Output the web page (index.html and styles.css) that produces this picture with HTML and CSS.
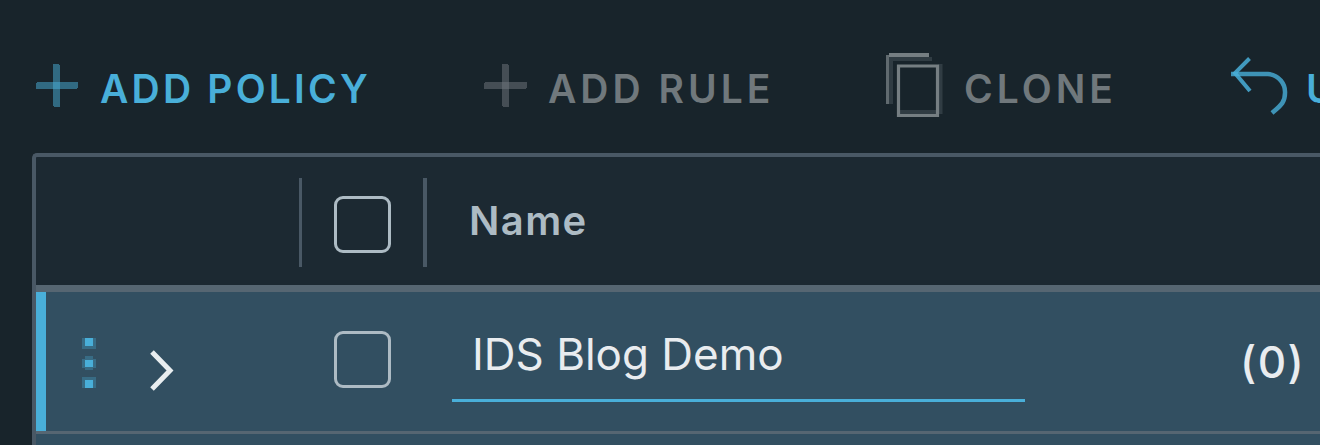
FILE: index.html
```html
<!DOCTYPE html>
<html lang="en">
<head>
<meta charset="utf-8">
<title>Policies</title>
<link rel="stylesheet" href="styles.css">
</head>
<body>
<nav class="toolbar">
  <div class="action primary">
    <svg class="icon plus" width="43" height="72" viewBox="0 0 43 72" fill="currentColor"><path d="M1 32h41v6h-1v1H0v-6h1z"/><path d="M17 14h6v1h1v42h-6v-1h-1z"/></svg>
    <span class="label policy">ADD POLICY</span>
  </div>
  <div class="action">
    <svg class="icon plus" width="43" height="72" viewBox="0 0 43 72" fill="#727780"><path d="M1 32h42v6h-1v1H0v-6h1z"/><path d="M18 14h6v1h1v42h-6v-1h-1z"/></svg>
    <span class="label rule">ADD RULE</span>
  </div>
  <div class="action">
    <svg class="icon" width="57" height="72" viewBox="0 0 57 72" fill="none"><path d="M5 54V9H46" stroke="#303c43" stroke-width="4"/><path d="M1.500 54V5" stroke="#606a6f" stroke-width="3"/><path d="M3 5H43" stroke="#757e82" stroke-width="4"/><path d="M14 62H50M54.500 14v50" stroke="#303c43" stroke-width="4"/><path d="M12.500 16H51.500V65.500H12.500z" stroke="#757e82" stroke-width="3.200"/></svg>
    <span class="label clone">CLONE</span>
  </div>
  <div class="action primary">
    <svg class="icon" width="57" height="72" viewBox="0 0 57 72" fill="none" stroke="currentColor"><path d="M18.500 8.500L4 23L19 41" stroke-width="4" opacity=".85"/><path d="M0 24H37C48 25 54.500 34 54 43C54 53 49 56 41 63" stroke-width="4.500" opacity=".8"/></svg>
    <span class="label undo">UNDO</span>
  </div>
</nav>
<main class="table">
  <div class="row head">
    <div></div><i class="sep"></i>
    <div class="check"><span class="box"></span></div><i class="sep"></i>
    <div class="name">Name</div>
  </div>
  <div class="row item">
    <div class="controls">
      <svg class="dots" width="14" height="54" viewBox="0 0 14 54" fill="#49afd9"><g opacity=".3"><path d="M0 3h14v11H0zM0 24h14v9H0zM3 21h8v14H3zM0 42h14v11H0z"/></g><path d="M3 3h8v8H3zM3 25h8v7H3zM3 45h8v8H3z"/></svg>
      <svg class="chevron" width="26" height="44" viewBox="0 0 26 44" fill="none" stroke="#e9eef0" stroke-width="5"><path d="M3 3L21 21.500L3 40"/></svg>
    </div><i></i>
    <div class="check"><span class="box"></span></div><i></i>
    <div class="field"><span>IDS Blog Demo</span></div>
    <div class="count">(0)</div>
  </div>
  <div class="next"></div>
</main>
</body>
</html>
```
FILE: styles.css
```css
* { box-sizing: border-box; }
body {
  margin: 0;
  height: 445px;
  overflow: hidden;
  background: #18242b;
  color: #e9ecef;
  font-family: Inter, Lato, sans-serif;
}
.toolbar {
  display: grid;
  grid-template-columns: 448px 402px 345px minmax(0, 1fr);
  height: 153px;
  padding: 50px 0 0 36px;
  overflow: hidden;
  color: #70787c;
}
.action { display: flex; align-items: flex-start; gap: 21px; white-space: nowrap; }
.action.primary { color: #49afd9; }
.action:last-child { gap: 18px; overflow: hidden; }
.icon { flex: none; }
.plus path { opacity: .5; }
.label { font-size: 39px; line-height: 60px; font-weight: 600; padding-top: 9px; letter-spacing: 3.200px; }
.rule { letter-spacing: 4px; }
.clone { letter-spacing: 4px; }
.table {
  height: 292px;
  margin-left: 32px;
  border: solid #495865;
  border-width: 4px 0 0 4px;
  border-top-left-radius: 5px;
  background: #1c2932;
}
.row { display: grid; }
.head { grid-template-columns: 263px 3px 121px 4px 1fr; height: 135px; border-bottom: 7px solid #566672; }
.sep { height: 89px; margin-top: 21px; background: #495865; }
.check { display: flex; padding: 39px 0 0 32px; }
.box { width: 57px; height: 57px; border: 3.500px solid #adbbc4; border-radius: 9px; }
.name { padding: 34px 0 0 42px; color: #adbbc4; font-size: 40px; line-height: 59px; font-weight: 600; letter-spacing: 1.400px; }
.item {
  grid-template-columns: 263px 3px 121px 4px 813px 1fr;
  height: 142px;
  border-bottom: 3px solid #566672;
  box-shadow: inset 10px 0 #49afd9;
  background: #324f61;
}
.controls { display: flex; align-items: flex-start; gap: 53px; padding: 43px 0 0 46px; }
.chevron { margin-top: 14px; }
.field {
  width: 573px;
  height: 110px;
  margin-left: 25px;
  padding: 32px 0 0 20px;
  border-bottom: 3px solid #49afd9;
  font-size: 44px;
  line-height: 60px;
}
.count { padding: 40px 0 0; font-size: 44px; line-height: 60px; font-weight: 500; letter-spacing: 1.500px; }
.next { height: 11px; background: #324f61; }
```
